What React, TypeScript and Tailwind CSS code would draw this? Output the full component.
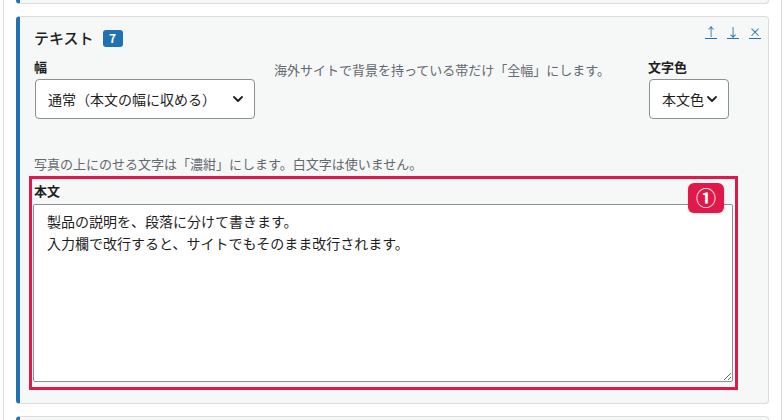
import { ChevronDown } from "lucide-react";

const font = { fontFamily: '"Noto Sans CJK JP", "Noto Sans", sans-serif' };

function Select({ label, width }: { label: string; width: string }) {
  return (
    <div
      className={`${width} h-[40px] flex items-center justify-between pl-[12px] pr-[8px] bg-white border border-[#8c8f94] rounded-[4px] text-[14px] text-[#1e1e1e] whitespace-nowrap`}
    >
      <span>{label}</span>
      <ChevronDown className="w-[16px] h-[16px] shrink-0" strokeWidth={2.75} />
    </div>
  );
}

export default function App() {
  return (
    <div className="w-full h-[420px] overflow-hidden bg-white" style={font}>
      <div className="ml-[3px] w-[779px] h-full border-x border-[#dcdcde] px-3">
        {/* previous block */}
        <div className="h-[4px] bg-[#f6f7f7] border-l-4 border-l-[#2271b1] border-b border-r border-[#dcdcde] rounded-b-[4px]" />

        {/* text block */}
        <div className="mt-[12px] h-[388px] bg-[#f6f7f7] border border-[#dcdcde] border-l-4 border-l-[#2271b1] rounded-[4px] pt-[10px] pl-[14px] pr-[34px]">
          <div className="flex items-start justify-between">
            <div className="flex items-center gap-[9px] h-[22px]">
              <span className="text-[15px] font-medium text-[#1e1e1e] leading-[22px]">テキスト</span>
              <span className="w-[20px] h-[17px] rounded-[3px] bg-[#2271b1] text-white text-[12px] font-bold flex items-center justify-center">
                7
              </span>
            </div>
            <div className="-mr-[27px] -mt-[2px] flex gap-[10px] text-[12px] leading-[14px] text-[#2271b1]">
              <a href="#" className="underline">↑</a>
              <a href="#" className="underline">↓</a>
              <a href="#" className="underline">×</a>
            </div>
          </div>

          <div className="mt-[9px] flex">
            <div className="w-[240px]">
              <div className="text-[13px] font-bold leading-[18px] text-[#1e1e1e]">幅</div>
              <div className="mt-[3px] ml-[1px]">
                <Select label="通常（本文の幅に収める）" width="w-[220px]" />
              </div>
            </div>
            <div className="w-[374px] pt-[3px] text-[13px] leading-[18px] text-[#646970]">
              海外サイトで背景を持っている帯だけ「全幅」にします。
            </div>
            <div>
              <div className="text-[13px] font-bold leading-[18px] text-[#1e1e1e]">文字色</div>
              <div className="mt-[3px] ml-[1px]">
                <Select label="本文色" width="w-[80px]" />
              </div>
            </div>
          </div>

          <p className="mt-[36px] text-[13px] leading-[18px] text-[#646970]">
            写真の上にのせる文字は「濃紺」にします。白文字は使いません。
          </p>

          <div className="relative mt-[3px] -ml-[5px] w-[709px] border-[3px] border-[#e0194a] pt-[3px] pb-[5px] pl-[1px]">
            <div className="pl-[1px] text-[13px] font-bold leading-[18px] text-[#1e1e1e]">本文</div>
            <textarea
              className="mt-[4px] block w-[700px] h-[178px] bg-white border border-[#8c8f94] rounded-[2px] px-[13px] pt-[5px] text-[14px] leading-[22px] text-[#1e1e1e] outline-none"
              defaultValue={"製品の説明を、段落に分けて書きます。\n入力欄で改行すると、サイトでもそのまま改行されます。"}
            />
            <div className="absolute top-[4px] right-[11px] w-[36px] h-[30px] rounded-[6px] bg-[#e0194a] shadow-sm flex items-center justify-center text-white text-[20px] font-bold leading-none">
              ①
            </div>
          </div>
        </div>

        {/* next block */}
        <div className="mt-[12px] h-[20px] bg-[#f6f7f7] border border-[#dcdcde] border-l-4 border-l-[#2271b1] rounded-t-[4px]" />
      </div>
    </div>
  );
}
